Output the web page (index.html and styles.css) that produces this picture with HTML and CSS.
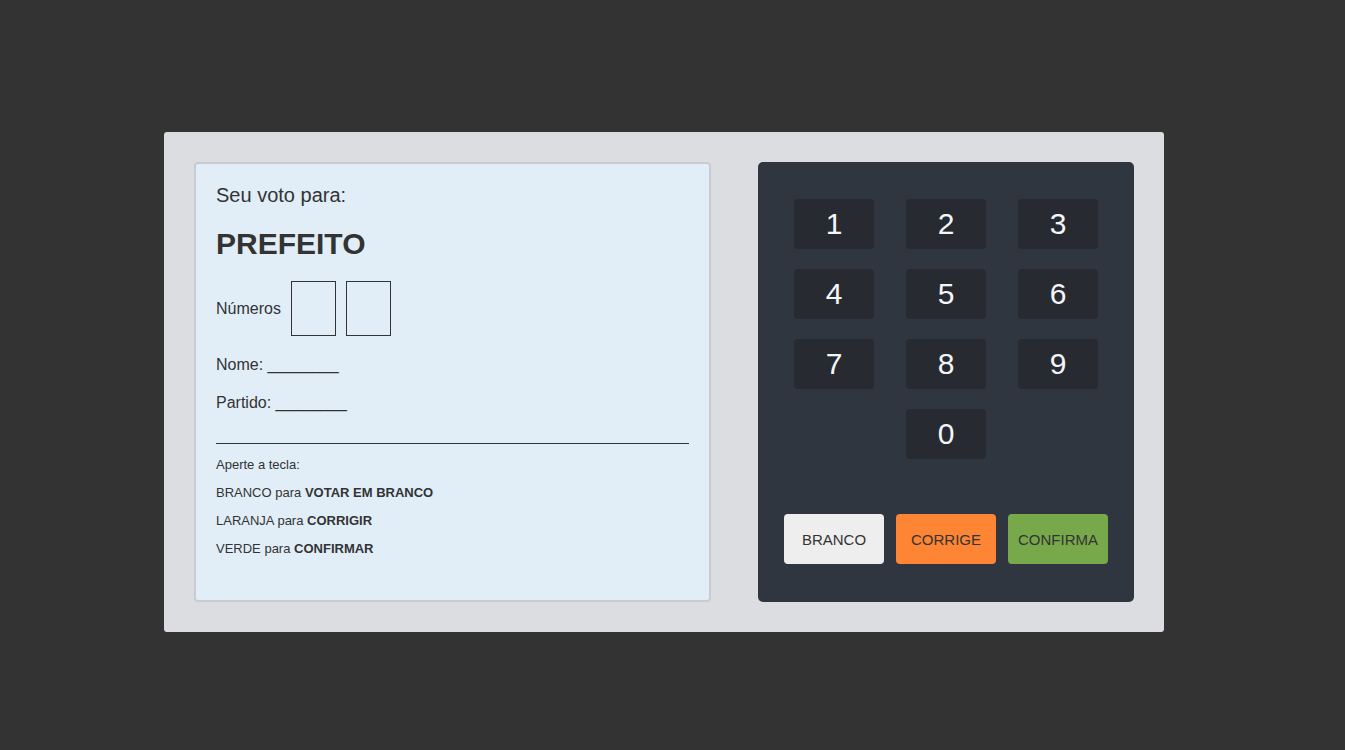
FILE: index.html
```html
<!DOCTYPE html>
<html lang="pt-BR">
<head>
<meta charset="utf-8">
<title>Urna</title>
<link rel="stylesheet" href="styles.css">
</head>
<body>
<div class="page">
  <div class="urna">
    <div class="tela">
      <div class="voto-para">Seu voto para:</div>
      <div class="cargo">PREFEITO</div>
      <div class="numeros">
        <span>Números</span>
        <div class="digito"></div>
        <div class="digito"></div>
      </div>
      <div class="campo">Nome: ________</div>
      <div class="campo">Partido: ________</div>
      <div class="instrucoes">
        <p>Aperte a tecla:</p>
        <p>BRANCO para <b>VOTAR EM BRANCO</b></p>
        <p>LARANJA para <b>CORRIGIR</b></p>
        <p>VERDE para <b>CONFIRMAR</b></p>
      </div>
    </div>
    <div class="teclado">
      <div class="linha">
        <div class="tecla">1</div><div class="tecla">2</div><div class="tecla">3</div>
      </div>
      <div class="linha">
        <div class="tecla">4</div><div class="tecla">5</div><div class="tecla">6</div>
      </div>
      <div class="linha">
        <div class="tecla">7</div><div class="tecla">8</div><div class="tecla">9</div>
      </div>
      <div class="linha">
        <div class="tecla">0</div>
      </div>
      <div class="acoes">
        <div class="acao branco">BRANCO</div>
        <div class="acao corrige">CORRIGE</div>
        <div class="acao confirma">CONFIRMA</div>
      </div>
    </div>
  </div>
</div>
</body>
</html>
```
FILE: styles.css
```css
html, body {
  margin: 0;
  padding: 0;
  background: #333333;
  font-family: "Liberation Sans", Arial, sans-serif;
  color: #333333;
}
.page {
  padding: 132px 0 0 164px;
  height: 618px;
}
.urna {
  width: 1000px;
  height: 500px;
  box-sizing: border-box;
  padding: 30px;
  background: #dcdde1;
  border-radius: 3px;
  display: flex;
  justify-content: space-between;
}
.tela {
  width: 517px;
  height: 440px;
  box-sizing: border-box;
  background: #e1eef8;
  border: 2px solid #c8ccd0;
  border-radius: 4px;
  padding: 20px;
  display: flex;
  flex-direction: column;
}
.voto-para {
  font-size: 20px;
  line-height: 23px;
}
.cargo {
  margin-top: 20px;
  font-size: 30px;
  font-weight: bold;
  line-height: 34px;
}
.numeros {
  margin-top: 20px;
  display: flex;
  align-items: center;
  gap: 10px;
  font-size: 16px;
}
.digito {
  width: 43px;
  height: 53px;
  border: 1px solid #333333;
}
.campo {
  margin-top: 20px;
  font-size: 16px;
  line-height: 18px;
}
.instrucoes {
  margin-top: 31px;
  border-top: 1px solid #333333;
  font-size: 13px;
  line-height: 15px;
}
.instrucoes p {
  margin: 13px 0 0 0;
}
.teclado {
  width: 376px;
  height: 440px;
  box-sizing: border-box;
  background: #2f3640;
  border-radius: 5px;
  padding-top: 37px;
  display: flex;
  flex-direction: column;
  align-items: center;
}
.linha {
  display: flex;
  gap: 32px;
  justify-content: center;
  margin-bottom: 20px;
}
.tecla {
  width: 80px;
  height: 50px;
  background: #272b31;
  border-radius: 4px;
  color: #f5f6fa;
  font-size: 30px;
  display: flex;
  align-items: center;
  justify-content: center;
}
.acoes {
  margin-top: 35px;
  display: flex;
  gap: 12px;
}
.acao {
  width: 100px;
  height: 50px;
  border-radius: 4px;
  font-size: 15px;
  color: #333333;
  display: flex;
  align-items: center;
  justify-content: center;
}
.branco { background: #eeeeee; }
.corrige { background: #fe8534; }
.confirma { background: #77a94b; }
```
